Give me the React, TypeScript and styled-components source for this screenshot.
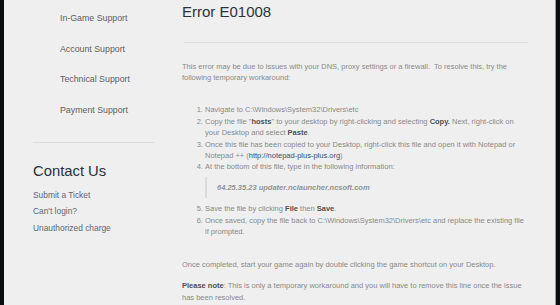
import styled, { createGlobalStyle } from "styled-components";

const GlobalStyle = createGlobalStyle`
  html, body {
    margin: 0;
    padding: 0;
    background: #0a0c10;
  }
  body {
    font-family: "Liberation Sans", Arial, sans-serif;
  }
`;

const Frame = styled.div`
  display: flex;
  width: 560px;
  height: 305px;
  overflow: hidden;
  background: #0a0c10;
`;

const Page = styled.div`
  display: flex;
  margin-left: 4px;
  width: 551px;
  height: 305px;
  background: #efefef;
  border-right: 1px solid #9a9a9a;
`;

const Sidebar = styled.aside`
  width: 166px;
  flex-shrink: 0;
  display: flex;
  flex-direction: column;
`;

const NavList = styled.ul`
  list-style: none;
  margin: 3.3px 0 0;
  padding: 0 0 0 56px;
`;

const NavItem = styled.li`
  font-size: 8.8px;
  line-height: 30.4px;
  color: #5e5e5e;
`;

const SideRule = styled.hr`
  border: 0;
  border-top: 1px solid #dcdcdc;
  margin: 17px 0 0 29px;
  width: 121px;
`;

const Contact = styled.div`
  padding-left: 29px;
  display: flex;
  flex-direction: column;
`;

const ContactTitle = styled.h3`
  margin: 18.5px 0 0;
  font-size: 14.8px;
  font-weight: 400;
  line-height: 20px;
  color: #26313d;
`;

const ContactLink = styled.a`
  font-size: 8.4px;
  line-height: 16.5px;
  color: #5a6572;
  text-decoration: none;
  &:first-of-type {
    margin-top: 5.5px;
  }
`;

const Main = styled.main`
  margin-left: 12px;
  width: 346px;
  display: flex;
  flex-direction: column;
  font-size: 7.5px;
  line-height: 11.4px;
  color: #8a8a8a;
`;

const Title = styled.h1`
  margin: 2px 0 0;
  font-size: 15px;
  font-weight: 400;
  line-height: 20px;
  color: #2e3236;
`;

const Rule = styled.hr`
  border: 0;
  border-top: 1px solid #dedede;
  margin: 20px 0 0 2px;
  width: 344px;
`;

const Block = styled.div<{ $top: number }>`
  margin-top: ${(p) => p.$top}px;
`;

const Steps = styled.ol`
  margin: 0;
  padding-left: 23px;
`;

const Quote = styled.blockquote`
  margin: 4.3px 0 5.3px 23px;
  padding: 4.8px 0 4.8px 10px;
  border-left: 2px solid #dadada;
  font-style: italic;
  font-weight: 700;
  color: #939393;
`;

const Strong = styled.b`
  color: #505050;
`;

const Link = styled.a`
  color: #34506e;
  text-decoration: none;
`;

export default function App() {
  return (
    <>
      <GlobalStyle />
      <Frame>
        <Page>
          <Sidebar>
            <NavList>
              <NavItem>In-Game Support</NavItem>
              <NavItem>Account Support</NavItem>
              <NavItem>Technical Support</NavItem>
              <NavItem>Payment Support</NavItem>
            </NavList>
            <SideRule />
            <Contact>
              <ContactTitle>Contact Us</ContactTitle>
              <ContactLink href="#">Submit a Ticket</ContactLink>
              <ContactLink href="#">Can't login?</ContactLink>
              <ContactLink href="#">Unauthorized charge</ContactLink>
            </Contact>
          </Sidebar>
          <Main>
            <Title>Error E01008</Title>
            <Rule />
            <Block $top={18}>
              This error may be due to issues with your DNS, proxy settings or a firewall.&nbsp; To resolve
              this, try the following temporary workaround:
            </Block>
            <Block $top={20.6}>
              <Steps>
                <li>Navigate to C:\Windows\System32\Drivers\etc</li>
                <li>
                  Copy the file "<Strong>hosts</Strong>" to your desktop by right-clicking and selecting{" "}
                  <Strong>Copy.</Strong> Next, right-click on your Desktop and select <Strong>Paste</Strong>.
                </li>
                <li>
                  Once this file has been copied to your Desktop, right-click this file and open it with Notepad
                  or Notepad ++ (<Link href="#">http://notepad-plus-plus.org</Link>)
                </li>
                <li>At the bottom of this file, type in the following information:</li>
              </Steps>
              <Quote>64.25.35.23 updater.nclauncher.ncsoft.com</Quote>
              <Steps start={5}>
                <li>
                  Save the file by clicking <Strong>File</Strong> then <Strong>Save</Strong>.
                </li>
                <li>
                  Once saved, copy the file back to C:\Windows\System32\Drivers\etc and replace the existing file
                  if prompted.
                </li>
              </Steps>
            </Block>
            <Block $top={21.6}>
              Once completed, start your game again by double clicking the game shortcut on your Desktop.
            </Block>
            <Block $top={9.6}>
              <Strong>Please note</Strong>: This is only a temporary workaround and you will have to remove this
              line once the issue has been resolved.
            </Block>
          </Main>
        </Page>
      </Frame>
    </>
  );
}
